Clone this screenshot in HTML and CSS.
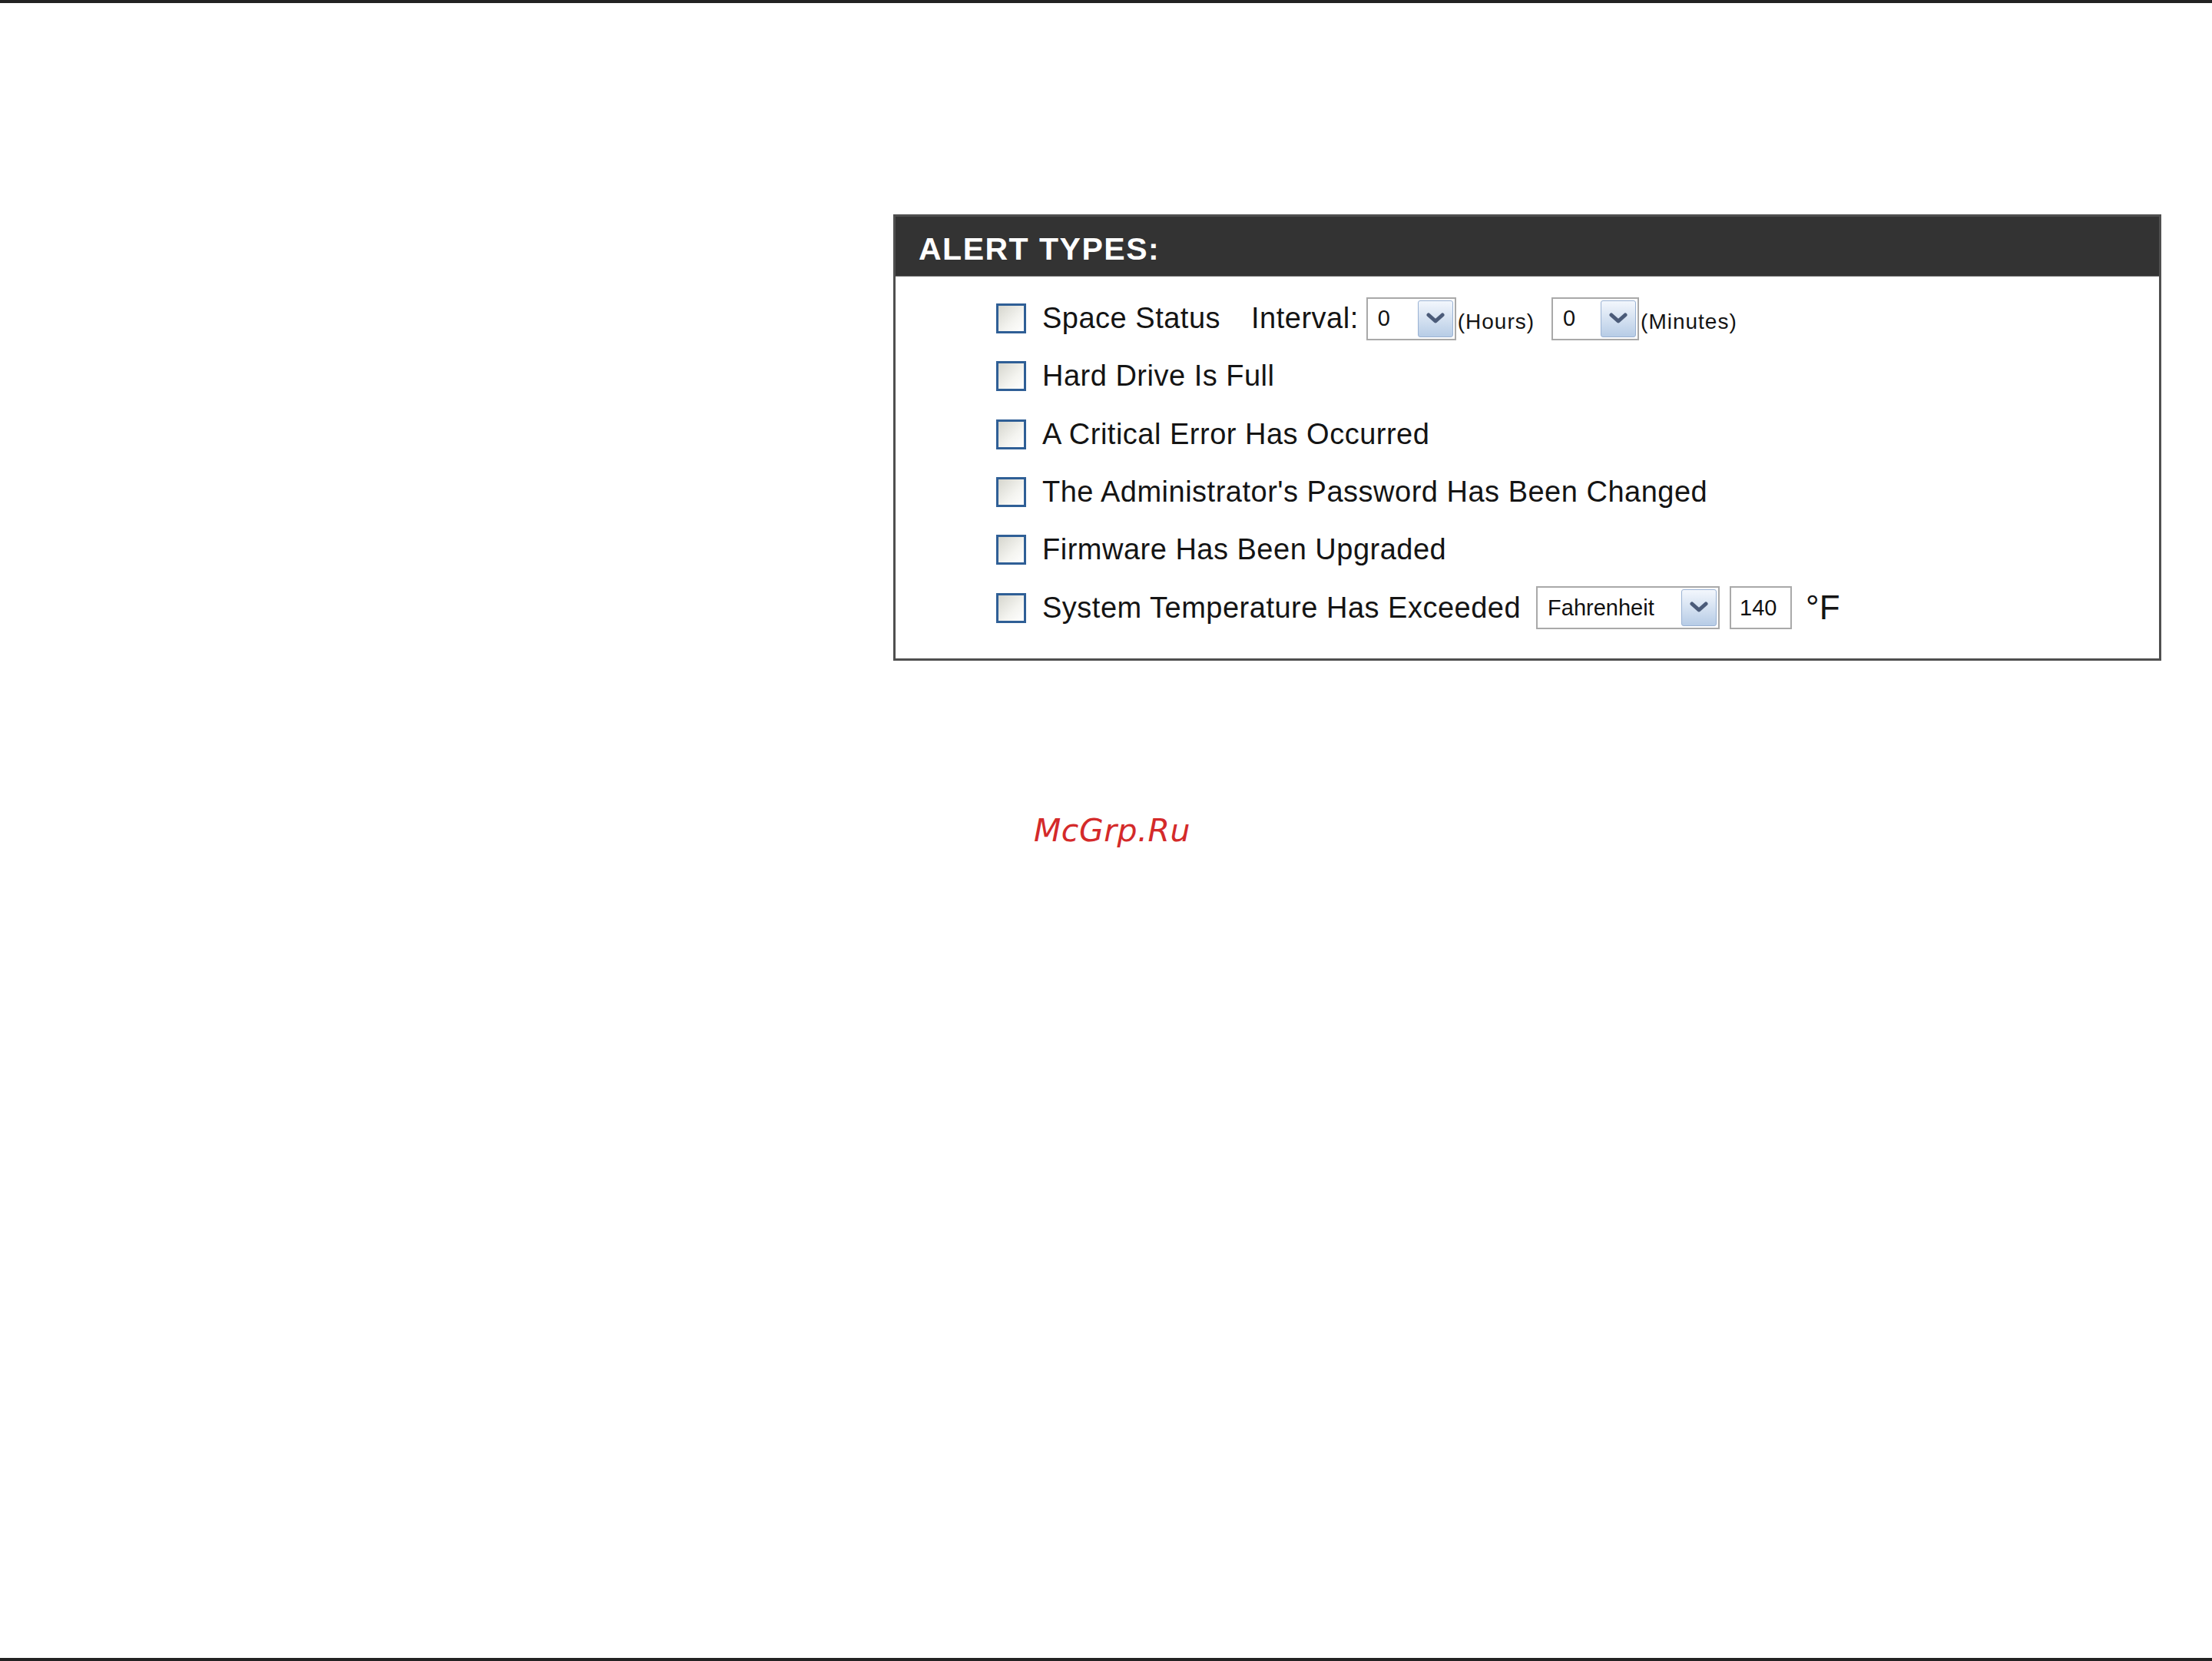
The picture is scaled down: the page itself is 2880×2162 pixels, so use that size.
FILE: index.html
```html
<!DOCTYPE html>
<html>
<head>
<meta charset="utf-8">
<title>Alert Types</title>
<link rel="stylesheet" href="styles.css">
</head>
<body>
<div class="page">
  <div class="rule"></div>
  <main class="content">
    <section class="panel">
      <h2 class="panel-title">ALERT TYPES:</h2>
      <div class="panel-body">
        <div class="row">
          <span class="check"></span>
          <span class="label">Space Status</span>
          <span class="label interval">Interval:</span>
          <div class="select sel-small">
            <span class="value">0</span>
            <span class="btn"><svg width="26" height="16" viewBox="0 0 26 16"><path d="M4 3 L13 11 L22 3" fill="none" stroke="#4b5b79" stroke-width="5" stroke-linecap="round" stroke-linejoin="round"/></svg></span>
          </div>
          <span class="unit">(Hours)</span>
          <div class="select sel-small sel-min">
            <span class="value">0</span>
            <span class="btn"><svg width="26" height="16" viewBox="0 0 26 16"><path d="M4 3 L13 11 L22 3" fill="none" stroke="#4b5b79" stroke-width="5" stroke-linecap="round" stroke-linejoin="round"/></svg></span>
          </div>
          <span class="unit">(Minutes)</span>
        </div>
        <div class="row">
          <span class="check"></span>
          <span class="label">Hard Drive Is Full</span>
        </div>
        <div class="row">
          <span class="check"></span>
          <span class="label">A Critical Error Has Occurred</span>
        </div>
        <div class="row">
          <span class="check"></span>
          <span class="label">The Administrator's Password Has Been Changed</span>
        </div>
        <div class="row">
          <span class="check"></span>
          <span class="label">Firmware Has Been Upgraded</span>
        </div>
        <div class="row">
          <span class="check"></span>
          <span class="label">System Temperature Has Exceeded</span>
          <div class="select sel-temp">
            <span class="value">Fahrenheit</span>
            <span class="btn"><svg width="26" height="16" viewBox="0 0 26 16"><path d="M4 3 L13 11 L22 3" fill="none" stroke="#4b5b79" stroke-width="5" stroke-linecap="round" stroke-linejoin="round"/></svg></span>
          </div>
          <span class="input">140</span>
          <span class="deg">°F</span>
        </div>
      </div>
    </section>
    <div class="watermark">McGrp.Ru</div>
  </main>
  <div class="rule"></div>
</div>
</body>
</html>
```

FILE: styles.css
```css
html, body {
  margin: 0;
  padding: 0;
  background: #ffffff;
}

body {
  font-family: "Liberation Sans", Arial, sans-serif;
  color: #141414;
}

.page {
  height: 2162px;
  display: flex;
  flex-direction: column;
}

.rule {
  flex: none;
  height: 4px;
  background: #222222;
}

.content {
  flex: 1;
}

.panel {
  margin: 275px 0 0 1163px;
  width: 1651px;
  box-sizing: border-box;
  border: 3px solid #4f4f4f;
  background: #ffffff;
}

.panel-title {
  margin: 0;
  height: 78px;
  box-sizing: border-box;
  padding: 8px 0 0 30px;
  background: #333333;
  color: #ffffff;
  font: bold 41px/1 "Liberation Sans", Arial, sans-serif;
  letter-spacing: 1.5px;
  display: flex;
  align-items: center;
  border-bottom: 1px solid #6a6a6a;
}

.panel-body {
  padding: 17px 0 28px 131px;
}

.row {
  height: 75.3px;
  display: flex;
  align-items: center;
}

.check {
  flex: none;
  width: 39px;
  height: 39px;
  box-sizing: border-box;
  border: 3px solid #2f5f96;
  background: linear-gradient(135deg, #d6d6ce 0%, #f4f4f0 60%, #ffffff 100%);
  margin-right: 21px;
}

.label {
  font-size: 38px;
  letter-spacing: 0.5px;
  color: #141414;
  white-space: nowrap;
}

.interval {
  margin-left: 40px;
  margin-right: 10px;
}

.select {
  flex: none;
  display: flex;
  height: 56px;
  box-sizing: border-box;
  border: 2px solid #a9a9a9;
  background: #ffffff;
  padding: 2px;
}

.select .value {
  flex: 1;
  font-size: 29px;
  padding-left: 11px;
  display: flex;
  align-items: center;
  color: #111111;
}

.select .btn {
  flex: none;
  width: 46px;
  box-sizing: border-box;
  border: 1px solid #9ab2d3;
  border-radius: 3px;
  background: linear-gradient(#f3f7fd, #b7cce6);
  display: flex;
  align-items: center;
  justify-content: center;
}

.sel-small {
  width: 117px;
}

.sel-min {
  margin-left: 22px;
  width: 114px;
}

.sel-temp {
  width: 239px;
  margin-left: 20px;
}

.unit {
  font-size: 28px;
  letter-spacing: 1px;
  margin-left: 2px;
  padding-top: 8px;
  color: #141414;
}

.input {
  flex: none;
  width: 81px;
  height: 56px;
  box-sizing: border-box;
  border: 2px solid #a9a9a9;
  margin-left: 13px;
  padding-left: 11px;
  font-size: 29px;
  display: flex;
  align-items: center;
  color: #111111;
}

.deg {
  font-size: 44px;
  margin-left: 18px;
  color: #141414;
}

.watermark {
  margin: 196px 0 0 1346px;
  font: italic 41px/50px "DejaVu Sans", sans-serif;
  color: #d42a2a;
  letter-spacing: 0.5px;
}
```
